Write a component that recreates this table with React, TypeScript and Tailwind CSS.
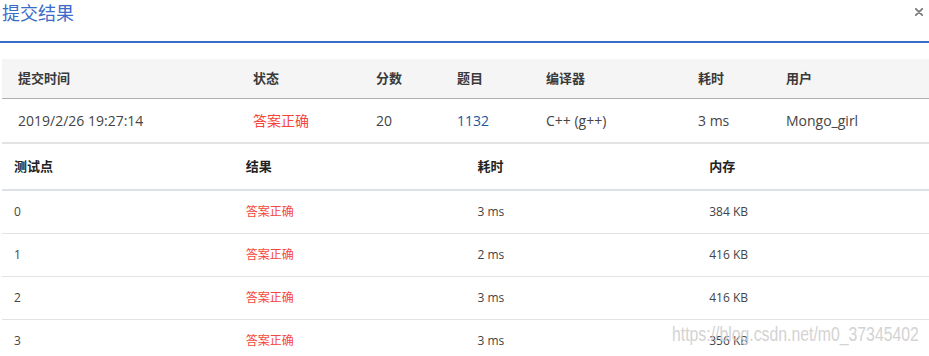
import React from "react";

const font = { fontFamily: '"Open Sans", "Noto Sans CJK SC", sans-serif' };

export default function App() {
  const rows = [
    ["0", "3 ms", "384 KB"],
    ["1", "2 ms", "416 KB"],
    ["2", "3 ms", "416 KB"],
    ["3", "3 ms", "356 KB"],
  ];
  return (
    <div className="relative w-[929px] h-[356px] overflow-hidden bg-white text-[#333]" style={font}>
      <div className="flex h-[41px] items-start justify-between">
        <div className="pl-[2px] pt-[1px] text-[18px] leading-[24px] text-[#3b6cc8]">提交结果</div>
        <div className="pr-[6px] pt-[8px]">
          <svg width="8" height="8" viewBox="0 0 8 8">
            <path d="M0.8 0.8 L7.2 7.2 M7.2 0.8 L0.8 7.2" stroke="#7a7a7a" strokeWidth="1.8" strokeLinecap="round" />
          </svg>
        </div>
      </div>
      <div className="h-[2px] bg-[#3b6cc4]" />
      <div className="h-[16px]" />
      <div className="ml-[2px]">
        <div className="flex h-[40px] items-center bg-[#f5f5f5] border-b border-[#b0b0b0] text-[13px] font-semibold text-[#3a3a3a]">
          <div className="w-[251px] pl-[16px]">提交时间</div>
          <div className="w-[123px]">状态</div>
          <div className="w-[81px]">分数</div>
          <div className="w-[89px]">题目</div>
          <div className="w-[152px]">编译器</div>
          <div className="w-[88px]">耗时</div>
          <div>用户</div>
        </div>
        <div className="flex h-[45px] items-center border-b-2 border-[#e3e3e3] text-[14px] pb-[1px] text-[#444]">
          <div className="w-[251px] pl-[16px]">2019/2/26 19:27:14</div>
          <div className="w-[123px] text-[#f4473b]">答案正确</div>
          <div className="w-[81px]">20</div>
          <div className="w-[89px] text-[#23559e]">1132</div>
          <div className="w-[152px]">C++ (g++)</div>
          <div className="w-[88px]">3 ms</div>
          <div>Mongo_girl</div>
        </div>
        <div className="grid grid-cols-4 h-[47px] items-center border-b-2 border-[#dde0e4] text-[13px] font-semibold pt-[1px] text-[#222]">
          <div className="pl-[12px]">测试点</div>
          <div className="pl-[12px]">结果</div>
          <div className="pl-[12px]">耗时</div>
          <div className="pl-[12px]">内存</div>
        </div>
        {rows.map((r) => (
          <div key={r[0]} className="grid grid-cols-4 h-[43px] items-center border-b border-[#e2e2e2] text-[12px] text-[#444]">
            <div className="pl-[12px]">{r[0]}</div>
            <div className="pl-[12px] text-[#f4473b]">答案正确</div>
            <div className="pl-[12px]">{r[1]}</div>
            <div className="pl-[12px]">{r[2]}</div>
          </div>
        ))}
      </div>
      <div
        className="absolute left-[672px] top-[322px] text-[20px] leading-[24px] text-[#cfcfcf] opacity-90 origin-left scale-x-[0.79]"
        style={{ fontFamily: '"Liberation Sans", Arial, sans-serif' }}
      >
        https://blog.csdn.net/m0_37345402
      </div>
    </div>
  );
}
